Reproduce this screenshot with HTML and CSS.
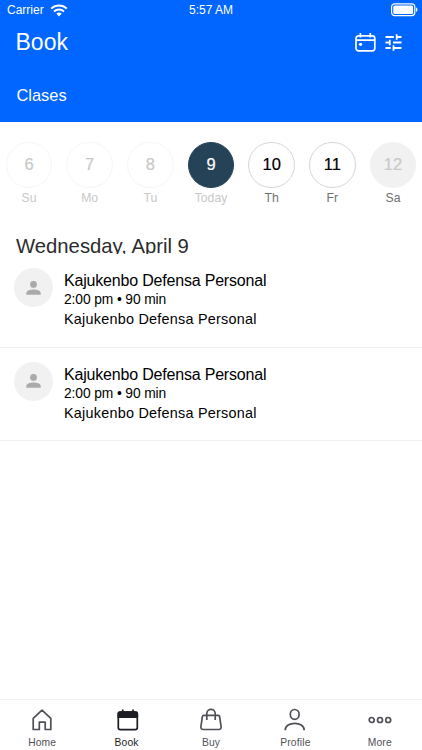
FILE: index.html
```html
<!DOCTYPE html>
<html lang="en">
<head>
<meta charset="utf-8">
<title>Book</title>
<link rel="stylesheet" href="styles.css">
</head>
<body>
<div class="app">
  <header class="header">
    <div class="status">
      <div class="carrier">
        <span>Carrier</span>
        <svg width="18" height="13" viewBox="0 0 18 13" fill="none" stroke="#fff" stroke-width="2"><path d="M1.2 4.6C5.4.4 12.600.4 16.800 4.600M4 7.500c2.800-2.700 7.200-2.700 10 0"/><path d="M6.300 9.500Q9 7.500 11.700 9.500L9 12.400z" fill="#fff" stroke="none"/></svg>
      </div>
      <span class="time">5:57 AM</span>
      <svg class="battery" width="28" height="14" viewBox="0 0 28 14" fill="none"><rect x="1.600" y=".8" width="23.200" height="11.800" rx="3" stroke="#fff" stroke-width="1.200"/><rect x="3.300" y="2.500" width="19.800" height="8.400" rx="1.500" fill="#fff"/><path d="M26 4.500c2 .7 2 3.700 0 4.400z" fill="#fff"/></svg>
    </div>
    <div class="titlebar">
      <h1 class="title">Book</h1>
      <div class="actions">
        <svg width="21" height="19" viewBox="0 0 21 19" fill="none" stroke="#fff" stroke-width="1.700"><rect x="1" y="2.800" width="18.800" height="15" rx="2.500"/><path d="M1 7.200h18.800M5.400 0v4.500M15.300 0v4.500"/><circle cx="5.500" cy="11.300" r="1.600" fill="#fff" stroke="none"/></svg>
        <svg width="17" height="17" viewBox="0 0 17 17" fill="none" stroke="#fff" stroke-width="1.800"><path d="M.5 3h8.300M12.500 3h4M11.700.3v5.400M.5 8.500h4M8 8.500h8.500M4.800 5.800v5.400M.5 14h5.300M9.300 14h7.200M8.500 11.300v5.400"/></svg>
      </div>
    </div>
    <div class="section">Clases</div>
  </header>

  <nav class="days">
    <div class="day past"><span class="num">6</span><span class="name">Su</span></div>
    <div class="day past"><span class="num">7</span><span class="name">Mo</span></div>
    <div class="day past"><span class="num">8</span><span class="name">Tu</span></div>
    <div class="day today"><span class="num">9</span><span class="name">Today</span></div>
    <div class="day"><span class="num">10</span><span class="name">Th</span></div>
    <div class="day"><span class="num">11</span><span class="name">Fr</span></div>
    <div class="day empty"><span class="num">12</span><span class="name">Sa</span></div>
  </nav>

  <h2 class="date">Wednesday, April 9</h2>

  <main class="classes">
    <article class="class">
      <div class="avatar"><svg width="16" height="16" viewBox="0 0 16 16" fill="#aaa"><circle cx="7.500" cy="4.400" r="3.400"/><path d="M.3 14.800v-1.600C.3 10.700 4.500 9.600 7.500 9.600s7.200 1.100 7.200 3.600v1.600z"/></svg></div>
      <div class="info">
        <div class="name-line">Kajukenbo Defensa Personal</div>
        <div class="time-line">2:00 pm • 90 min</div>
        <div class="desc-line">Kajukenbo Defensa Personal</div>
      </div>
    </article>
    <article class="class">
      <div class="avatar"><svg width="16" height="16" viewBox="0 0 16 16" fill="#aaa"><circle cx="7.500" cy="4.400" r="3.400"/><path d="M.3 14.800v-1.600C.3 10.700 4.500 9.600 7.500 9.600s7.200 1.100 7.200 3.600v1.600z"/></svg></div>
      <div class="info">
        <div class="name-line">Kajukenbo Defensa Personal</div>
        <div class="time-line">2:00 pm • 90 min</div>
        <div class="desc-line">Kajukenbo Defensa Personal</div>
      </div>
    </article>
  </main>

  <footer class="tabs">
    <div class="tab">
      <svg width="24" height="24" viewBox="0 0 24 24"><path d="M3.200 10.300 12 2.200l8.800 8.100v11.200h-5.600v-7.300H9.300v7.300H3.200z"/></svg>
      <span>Home</span>
    </div>
    <div class="tab active">
      <svg width="24" height="24" viewBox="0 0 24 24"><rect x="3.300" y="4" width="19" height="17.700" rx="2.200"/><path d="M3.300 9.200V5.500Q3.300 4 5 4h15.600q1.700 0 1.700 1.500v3.700z" fill="#1d1e24"/><path d="M7.700 1.500v3M18 1.500v3"/></svg>
      <span>Book</span>
    </div>
    <div class="tab">
      <svg width="24" height="24" viewBox="0 0 24 24"><path d="M4.800 7.300h14.400q1.200 0 1.400 1.200l1.500 10.200q.3 2.800-2.400 2.800H4.300q-2.700 0-2.400-2.800L3.400 8.500q.2-1.200 1.400-1.200zM7.800 12V5.500a4.200 4.200 0 0 1 8.400 0V12"/></svg>
      <span>Buy</span>
    </div>
    <div class="tab">
      <svg width="24" height="24" viewBox="0 0 24 24"><ellipse cx="11.700" cy="6.400" rx="4.400" ry="4.900"/><path d="M2.200 22.300c0-9.300 19-9.300 19 0"/></svg>
      <span>Profile</span>
    </div>
    <div class="tab">
      <svg width="24" height="24" viewBox="0 0 24 24"><circle cx="3.700" cy="12" r="2.500"/><circle cx="12" cy="12" r="2.500"/><circle cx="20.200" cy="12" r="2.500"/></svg>
      <span>More</span>
    </div>
  </footer>
</div>
</body>
</html>
```
FILE: styles.css
```css
* { box-sizing: border-box; }
body {
  margin: 0;
  background: #fff;
  color: #000;
  font-family: "Liberation Sans", Arial, sans-serif;
}
svg { display: block; flex: none; }
.app {
  display: flex;
  flex-direction: column;
  width: 422px;
  height: 750px;
  overflow: hidden;
}
.header {
  height: 122px;
  background: #0066ff;
  color: #fff;
}
.status {
  display: grid;
  grid-template-columns: 1fr auto 1fr;
  align-items: center;
  height: 20px;
  padding: 0 4px 0 7px;
  font-size: 12px;
}
.carrier { display: flex; align-items: center; gap: 6px; }
.time { padding-right: 3px; }
.battery { justify-self: end; }
.titlebar {
  display: flex;
  justify-content: space-between;
  align-items: center;
  height: 45px;
  padding: 0 20px 0 15.500px;
}
.title { margin: 0; font-size: 23px; font-weight: 400; }
.actions { display: flex; align-items: center; gap: 9px; }
.section { padding: 20px 16.500px 0; font-size: 16.400px; line-height: 20px; }
.days {
  display: grid;
  grid-template-columns: repeat(7, 1fr);
  margin: 19.500px -1.300px 0;
}
.day { display: flex; flex-direction: column; align-items: center; }
.num {
  display: flex;
  align-items: center;
  justify-content: center;
  width: 46.500px;
  height: 46.500px;
  border: 1px solid #d6d6d6;
  border-radius: 50%;
  font-size: 16.500px;
  -webkit-text-stroke: 0.200px currentColor;
}
.name { margin-top: 2px; color: #707070; font-size: 12.200px; line-height: 16px; }
.past .num { border-color: #f6f6f6; color: #c8c8c8; }
.past .name, .today .name { color: #c8c8c8; }
.today .num { border-color: #264257; background: #264257; color: #fff; }
.empty .num { border-color: #f1f1f1; background: #f1f1f1; color: #c8c8c8; }
.date {
  height: 20px;
  margin: 28px 0 0 16px;
  overflow: hidden;
  color: #2b2b2b;
  font-size: 20.300px;
  font-weight: 400;
  line-height: 24px;
}
.class {
  display: flex;
  gap: 11px;
  height: 93.700px;
  padding: 14px 14px 0;
  border-bottom: 1px solid #f1f1f1;
}
.avatar {
  display: flex;
  align-items: center;
  justify-content: center;
  width: 39px;
  height: 39px;
  border-radius: 50%;
  background: #f1f1f1;
}
.info { padding-top: 2px; }
.name-line { font-size: 16px; line-height: 21px; letter-spacing: -0.190px; }
.time-line { font-size: 13.800px; line-height: 18px; letter-spacing: -0.100px; }
.desc-line { font-size: 14.400px; line-height: 20px; letter-spacing: 0.240px; }
.tabs {
  display: grid;
  grid-template-columns: repeat(5, 1fr);
  height: 51px;
  margin-top: auto;
  border-top: 1px solid #f3f3f3;
}
.tab {
  display: flex;
  flex-direction: column;
  align-items: center;
  padding-top: 8px;
  color: #505057;
  font-size: 10.300px;
  line-height: 12px;
  letter-spacing: 0.150px;
}
.tab span { margin-top: 5px; }
.tab svg { fill: none; stroke: #505057; stroke-width: 1.700; stroke-linejoin: round; }
.tab.active { color: #1d1e24; }
.tab.active svg { stroke: #1d1e24; }
```
